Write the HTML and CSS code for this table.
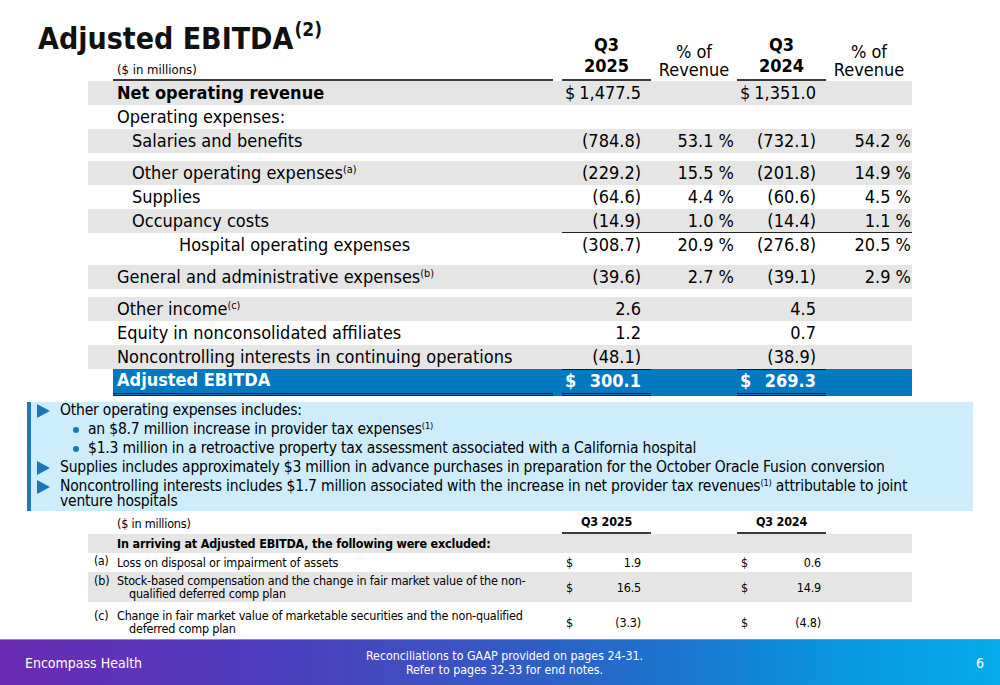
FILE: index.html
```html
<!DOCTYPE html>
<html>
<head>
<meta charset="utf-8">
<link rel="stylesheet" href="styles.css">
</head>
<body>
<div class="slide">
  <h1 class="title">Adjusted EBITDA<sup>(2)</sup></h1>

  <div class="fin">
    <div class="r hd">
      <div class="l units">($ in millions)</div>
      <div class="v1 hq">Q3<br>2025</div>
      <div class="p1 hp">% of<br>Revenue</div>
      <div class="v2 hq">Q3<br>2024</div>
      <div class="p2 hp">% of<br>Revenue</div>
    </div>
    <div class="r g">
      <div class="l b">Net operating revenue</div>
      <div class="v1 d"><span>$</span><span>1,477.5</span></div>
      <div class="p1"></div>
      <div class="v2 d"><span>$</span><span>1,351.0</span></div>
      <div class="p2"></div>
    </div>
    <div class="r">
      <div class="l">Operating expenses:</div>
      <div class="v1"></div><div class="p1"></div><div class="v2"></div><div class="p2"></div>
    </div>
    <div class="r g">
      <div class="l i1">Salaries and benefits</div>
      <div class="v1">(784.8)</div><div class="p1">53.1 %</div><div class="v2">(732.1)</div><div class="p2">54.2 %</div>
    </div>
    <div class="sp"></div>
    <div class="r g">
      <div class="l i1">Other operating expenses<sup>(a)</sup></div>
      <div class="v1">(229.2)</div><div class="p1">15.5 %</div><div class="v2">(201.8)</div><div class="p2">14.9 %</div>
    </div>
    <div class="r">
      <div class="l i1">Supplies</div>
      <div class="v1">(64.6)</div><div class="p1">4.4 %</div><div class="v2">(60.6)</div><div class="p2">4.5 %</div>
    </div>
    <div class="r g ul">
      <div class="l i1">Occupancy costs</div>
      <div class="v1">(14.9)</div><div class="p1">1.0 %</div><div class="v2">(14.4)</div><div class="p2">1.1 %</div>
    </div>
    <div class="r">
      <div class="l i2">Hospital operating expenses</div>
      <div class="v1">(308.7)</div><div class="p1">20.9 %</div><div class="v2">(276.8)</div><div class="p2">20.5 %</div>
    </div>
    <div class="sp"></div>
    <div class="r g">
      <div class="l">General and administrative expenses<sup>(b)</sup></div>
      <div class="v1">(39.6)</div><div class="p1">2.7 %</div><div class="v2">(39.1)</div><div class="p2">2.9 %</div>
    </div>
    <div class="sp"></div>
    <div class="r g">
      <div class="l">Other income<sup>(c)</sup></div>
      <div class="v1">2.6</div><div class="p1"></div><div class="v2">4.5</div><div class="p2"></div>
    </div>
    <div class="r">
      <div class="l">Equity in nonconsolidated affiliates</div>
      <div class="v1">1.2</div><div class="p1"></div><div class="v2">0.7</div><div class="p2"></div>
    </div>
    <div class="r g">
      <div class="l">Noncontrolling interests in continuing operations</div>
      <div class="v1">(48.1)</div><div class="p1"></div><div class="v2">(38.9)</div><div class="p2"></div>
    </div>
    <div class="r tot">
      <div class="l b">Adjusted EBITDA</div>
      <div class="v1 d"><span>$</span><span>300.1</span></div>
      <div class="p1"></div>
      <div class="v2 d"><span>$</span><span>269.3</span></div>
      <div class="p2"></div>
    </div>
  </div>

  <div class="notes">
    <div class="n"><i class="tri"></i><div>Other operating expenses includes:</div></div>
    <div class="s"><i class="dot"></i><div>an $8.7 million increase in provider tax expenses<sup>(1)</sup></div></div>
    <div class="s"><i class="dot"></i><div>$1.3 million in a retroactive property tax assessment associated with a California hospital</div></div>
    <div class="n"><i class="tri"></i><div>Supplies includes approximately $3 million in advance purchases in preparation for the October Oracle Fusion conversion</div></div>
    <div class="n"><i class="tri"></i><div class="wrap">Noncontrolling interests includes $1.7 million associated with the increase in net provider tax revenues<sup>(1)</sup> attributable to joint venture hospitals</div></div>
  </div>

  <div class="ft">
    <div class="fr fh">
      <div class="tag"></div>
      <div class="fl">($ in millions)</div>
      <div class="f1 fq">Q3 2025</div>
      <div class="fp"></div>
      <div class="f2 fq">Q3 2024</div>
    </div>
    <div class="fr g fx">
      <div class="tag"></div>
      <div class="fl b">In arriving at Adjusted EBITDA, the following were excluded:</div>
    </div>
    <div class="fr fa">
      <div class="tag sm">(a)</div>
      <div class="fl">Loss on disposal or impairment of assets</div>
      <div class="f1 d"><span>$</span><span>1.9</span></div>
      <div class="fp"></div>
      <div class="f2 d"><span>$</span><span>0.6</span></div>
    </div>
    <div class="fr g fb">
      <div class="tag">(b)</div>
      <div class="fl hang">Stock-based compensation and the change in fair market value of the non-qualified deferred comp plan</div>
      <div class="f1 d"><span>$</span><span>16.5</span></div>
      <div class="fp"></div>
      <div class="f2 d"><span>$</span><span>14.9</span></div>
    </div>
    <div class="fr fc">
      <div class="tag">(c)</div>
      <div class="fl hang">Change in fair market value of marketable securities and the non-qualified deferred comp plan</div>
      <div class="f1 d"><span>$</span><span>(3.3)</span></div>
      <div class="fp"></div>
      <div class="f2 d"><span>$</span><span>(4.8)</span></div>
    </div>
  </div>

  <div class="grow"></div>

  <footer class="foot">
    <div class="brand">Encompass Health</div>
    <div class="ref">Reconciliations to GAAP provided on pages 24-31.<br>Refer to pages 32-33 for end notes.</div>
    <div class="pg">6</div>
  </footer>
</div>
</body>
</html>
```

FILE: styles.css
```css
* { box-sizing: border-box; }

html, body {
  margin: 0;
  padding: 0;
}

body {
  width: 1000px;
  height: 685px;
  overflow: hidden;
  background: #fff;
  color: #000;
  font-family: "DejaVu Sans Condensed", "DejaVu Sans", sans-serif;
  font-stretch: condensed;
}

.slide {
  height: 685px;
  display: flex;
  flex-direction: column;
}

sup {
  font-size: 0.6em;
  line-height: 0;
  vertical-align: 0.55em;
}

.b { font-weight: bold; }

/* Title */
.title {
  margin: 0;
  padding: 19px 0 0 38px;
  height: 59px;
  font-size: 30px;
  line-height: 40px;
  font-weight: bold;
  color: #111;
}
.title sup {
  font-size: 19px;
  vertical-align: 13px;
  margin-left: 1px;
}

/* Main table */
.fin {
  margin-top: -26px;
  font-size: 18px;
}

.r {
  display: grid;
  grid-template-columns: 440px 98px 86px 89px 86px;
  margin-left: 88px;
  width: 824px;
  padding-left: 25px;
  height: 24px;
  line-height: 24px;
  white-space: nowrap;
}

.g { background: #e5e5e5; }

.sp { height: 8px; }

.l { padding-left: 4px; }
.i1 { padding-left: 19px; }
.i2 { padding-left: 66px; }

.v1 { margin-left: 9px; text-align: right; padding-right: 10px; }
.v2 { text-align: right; padding-right: 10px; }
.p1 { text-align: right; padding-right: 3px; }
.p2 { text-align: right; padding-right: 1px; }

.d {
  display: flex;
  justify-content: space-between;
  padding-left: 3px;
}

/* header */
.r.hd {
  height: 48px;
  line-height: 21px;
  background: none;
}
.hd > div {
  display: flex;
  flex-direction: column;
  justify-content: flex-end;
}
.hd .units {
  font-size: 13px;
  line-height: 16px;
  padding-bottom: 1px;
  border-bottom: 2px solid #3a3a3a;
}
.hd .hq {
  font-weight: bold;
  text-align: center;
  padding: 0 0 3px 0;
  border-bottom: 2px solid #3a3a3a;
}
.hd .hp {
  text-align: center;
  line-height: 18px;
  padding: 0 0 2px 0;
}

/* Occupancy underline */
.ul .v1, .ul .p1, .ul .v2, .ul .p2 {
  border-bottom: 1.5px solid #222;
  line-height: 23px;
}

/* total row */
.r.tot {
  margin-left: 113px;
  width: 799px;
  padding-left: 0;
  background: #0079c1;
  color: #fff;
  height: 27px;
  line-height: 22px;
}
.tot .l {
  border-bottom: 3px double #1a1a1a;
}
.tot .v1, .tot .v2 {
  border-top: 1.5px solid #1a1a1a;
  border-bottom: 3px double #1a1a1a;
  font-weight: bold;
  line-height: 21px;
}

/* Notes */
.notes {
  margin: 6px 0 0 27px;
  width: 946px;
  height: 109px;
  background: #cdedfc;
  border-left: 4px solid #1f78c1;
  padding: 1px 0 0 0;
  font-size: 15.5px;
  letter-spacing: -0.2px;
  line-height: 15px;
}
.n, .s {
  display: flex;
  align-items: flex-start;
  margin-top: 4px;
}
.notes > :first-child { margin-top: 0; }
.tri {
  flex: none;
  width: 0;
  height: 0;
  border-left: 13px solid #1b75bc;
  border-top: 7px solid transparent;
  border-bottom: 7px solid transparent;
  margin: 1px 10px 0 6px;
}
.dot {
  flex: none;
  width: 6px;
  height: 6px;
  border-radius: 50%;
  background: #1b75bc;
  margin: 5px 9px 0 42px;
}
.wrap { width: 880px; }

/* Footnote table */
.ft {
  font-size: 12.5px;
  letter-spacing: -0.2px;
}
.fr {
  display: grid;
  grid-template-columns: 25px 440px 98px 86px 89px;
  margin-left: 88px;
  width: 824px;
  align-items: center;
}
.fh { height: 23px; align-items: end; }
.fx { height: 19px; }
.fa { height: 19px; }
.fb { height: 30px; }
.fc { height: 36px; }

.tag { padding-left: 6px; }
.tag.sm { font-size: 12px; position: relative; top: -2px; }
.fb .tag { align-self: start; line-height: 13px; padding-top: 2px; }
.fc .tag { align-self: start; line-height: 13px; padding-top: 7px; }
.fl { padding-left: 4px; line-height: 13px; }
.fx .fl { grid-column: 2 / 7; }
.fh .fl { padding-bottom: 4px; }
.hang { padding-left: 16px; text-indent: -12px; }
.fc .fl, .fc .d { position: relative; top: 2px; }

.fq {
  font-weight: bold;
  text-align: center;
  border-bottom: 2px solid #3a3a3a;
  padding-bottom: 3px;
}
.f1 { margin-left: 9px; }
.f1.d { padding: 0 10px 0 4px; }
.f2.d { padding: 0 5px 0 4px; }

.grow { flex: 1; }

/* Footer */
.foot {
  flex: none;
  height: 46px;
  display: grid;
  grid-template-columns: 1fr auto 1fr;
  align-items: center;
  padding: 0 16px 0 25px;
  background: linear-gradient(90deg, #6a2ab3 0%, #4f3cbc 25%, #3b52c2 45%, #1f70ca 65%, #0a93dd 82%, #06ace9 100%);
  border-top: 1px solid #8f86d4;
  color: #fff;
  font-family: "Liberation Sans Narrow", "DejaVu Sans Condensed", sans-serif;
}
.brand { font-size: 14px; }
.ref { font-size: 12.3px; line-height: 14px; text-align: center; }
.pg { font-size: 14px; text-align: right; }
```
